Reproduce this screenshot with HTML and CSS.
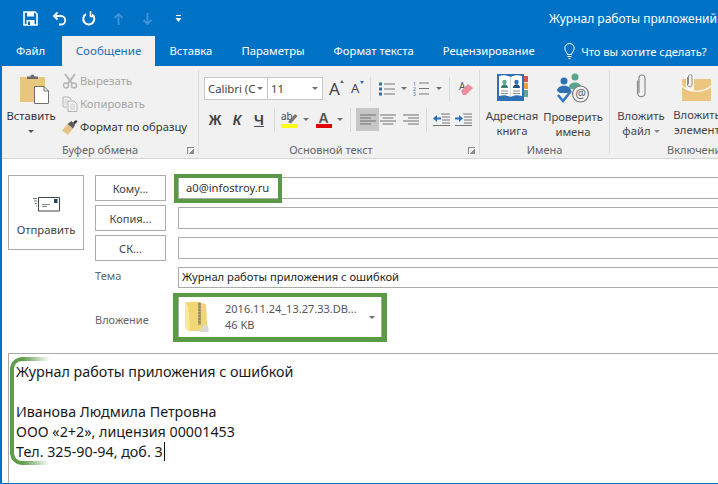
FILE: index.html
```html
<!DOCTYPE html>
<html lang="ru">
<head>
<meta charset="utf-8">
<title>Журнал работы приложения с ошибкой</title>
<link rel="stylesheet" href="styles.css">
</head>
<body>
<div class="window">
  <header class="titlebar">
    <div class="qat">
      <svg class="qi qi-save" width="15" height="15" viewBox="0 0 15 15"><path d="M1 1h11l2 2v11H1z" fill="none" stroke="#fff" stroke-width="1.6"/><rect x="4" y="1" width="7" height="4.5" fill="#fff"/><rect x="3.5" y="9" width="8" height="5" fill="#fff"/><rect x="5" y="10.5" width="2" height="3.5" fill="#0072c6"/></svg>
      <svg class="qi qi-undo" width="15" height="15" viewBox="0 0 15 15"><path d="M5.5 1.5 2 5l3.500 3.500" fill="none" stroke="#fff" stroke-width="1.800"/><path d="M2.500 5H9a4 4 0 0 1 0 8.500H7" fill="none" stroke="#fff" stroke-width="1.800"/></svg>
      <svg class="qi qi-redo" width="15" height="15" viewBox="0 0 15 15"><path d="M5 3.200a5.500 5.500 0 1 0 6 .3" fill="none" stroke="#fff" stroke-width="2"/><path d="M9.500 0v5.500H14" fill="none" stroke="#fff" stroke-width="1.600"/></svg>
      <svg class="qi qi-up" width="11" height="14" viewBox="0 0 11 14"><path d="M5.500 13V2M1.500 6l4-4 4 4" fill="none" stroke="#3f93d6" stroke-width="1.800"/></svg>
      <svg class="qi qi-down" width="11" height="14" viewBox="0 0 11 14"><path d="M5.500 1v11M1.500 8l4 4 4-4" fill="none" stroke="#3f93d6" stroke-width="1.800"/></svg>
      <svg class="qi qi-more" width="7" height="8" viewBox="0 0 7 8"><path d="M1 .5h5" stroke="#fff"/><path d="M.5 3h6L3.500 7z" fill="#fff"/></svg>
    </div>
    <div class="doc-title">Журнал работы приложений с ошибкой</div>
  </header>

  <nav class="tabs">
    <span class="tab tab-file">Файл</span>
    <span class="tab tab-active">Сообщение</span>
    <span class="tab">Вставка</span>
    <span class="tab">Параметры</span>
    <span class="tab">Формат текста</span>
    <span class="tab">Рецензирование</span>
    <span class="tell">
      <svg width="11" height="17" viewBox="0 0 11 17"><path d="M3.500 11.500C3 9 .8 8 .8 5.200a4.700 4.700 0 0 1 9.400 0C10.200 8 8 9 7.500 11.500z" fill="none" stroke="#fff"/><path d="M3.500 13.500h4M4.500 15.500h2" stroke="#fff"/></svg>
      Что вы хотите сделать?
    </span>
  </nav>

  <section class="ribbon">
    <div class="group g-clip">
      <div class="group-body clip-body">
        <div class="paste">
          <svg width="29" height="30" viewBox="0 0 29 30"><rect x="0" y="3" width="25" height="25" fill="#e8c67d"/><path d="M7 5V2.500h3.500a2 2 0 0 1 4 0H18V5z" fill="#6a6a6a"/><path d="M14.500 12.500H24l4.500 4.500v12.500h-14z" fill="#fff" stroke="#6f6f6f"/><path d="M24 12.500V17h4.500" fill="none" stroke="#6f6f6f"/></svg>
          <span class="paste-label">Вставить</span>
          <span class="caret caret-dark"></span>
        </div>
        <div class="clip-list">
          <div class="clip-row off">
            <svg width="16" height="16" viewBox="0 0 16 16"><path d="M3 1l7.500 10M13 1 5.500 11" stroke="#b5b5b5" stroke-width="2" fill="none"/><circle cx="4" cy="12.500" r="2.500" fill="none" stroke="#b5b5b5" stroke-width="1.400"/><circle cx="12" cy="12.500" r="2.500" fill="none" stroke="#b5b5b5" stroke-width="1.400"/></svg>
            <span>Вырезать</span>
          </div>
          <div class="clip-row off">
            <svg width="16" height="16" viewBox="0 0 16 16"><path d="M1 1h6l2 2v1M1 1v10h4" fill="none" stroke="#b5b5b5"/><path d="M6 5h6l3 3v7.500H6z" fill="none" stroke="#b5b5b5"/><path d="M8 9h5M8 11h5M8 13h5M2.500 4h3M2.500 6h2.500M2.500 8h2.500" stroke="#cfcfcf"/></svg>
            <span>Копировать</span>
          </div>
          <div class="clip-row">
            <svg width="16" height="16" viewBox="0 0 16 16"><path d="M0 11.500 5.500 5l5.500 4.500L6 16z" fill="#e3c486"/><path d="M5.500 5 9.500 2 13 6l-2 3.500z" fill="#5b5b5b"/><path d="M11 3.500 14 1l1.500 1.500-3 3z" fill="#333"/></svg>
            <span>Формат по образцу</span>
          </div>
        </div>
      </div>
      <div class="group-label">Буфер обмена<i class="launcher"></i></div>
    </div>

    <div class="group g-font">
      <div class="group-body font-body">
        <div class="font-row row-one">
          <div class="combo combo-font"><span class="combo-text">Calibri (С</span><span class="caret"></span></div>
          <div class="combo combo-size"><span>11</span><span class="caret"></span></div>
          <span class="grow">A<i class="tri tri-up"></i></span>
          <span class="shrink">A<i class="tri tri-down"></i></span>
          <i class="vsep sep-a"></i>
          <svg class="ico-bullets" width="16" height="14" viewBox="0 0 16 14"><path d="M5 2h11M5 7h11M5 12h11" stroke="#777"/><rect y="0.500" width="3" height="3" fill="#2a6fb5"/><rect y="5.500" width="3" height="3" fill="#2a6fb5"/><rect y="10.500" width="3" height="3" fill="#2a6fb5"/></svg>
          <span class="caret caret-bullets"></span>
          <svg class="ico-numbers" width="16" height="15" viewBox="0 0 16 15"><path d="M6 2h10M6 7.500h10M6 13h10" stroke="#777"/><text x="0" y="5" class="tiny">1</text><text x="0" y="10" class="tiny">2</text><text x="0" y="15" class="tiny">3</text></svg>
          <span class="caret caret-numbers"></span>
          <i class="vsep sep-b"></i>
          <svg class="ico-clear" width="15" height="17" viewBox="0 0 15 17"><text x="1" y="10" class="clear-a">A</text><path d="M3 11 10 4l5 4-7 7H5z" fill="#ed8c9a"/></svg>
        </div>
        <div class="font-row row-two">
          <b class="fmt fmt-b">Ж</b>
          <b class="fmt fmt-i">К</b>
          <b class="fmt fmt-u">Ч</b>
          <i class="vsep sep-c"></i>
          <svg class="ico-hl" width="17" height="18" viewBox="0 0 17 18"><text x="0" y="9" class="ab">ab</text><path d="M7 11 14 3l2.500 2-6.500 7.500z" fill="#777"/><rect y="13" width="17" height="4" fill="#ffff1e"/></svg>
          <span class="caret caret-hl"></span>
          <svg class="ico-color" width="16" height="17" viewBox="0 0 16 17"><text x="2.500" y="12" class="fa">A</text><rect y="13" width="16" height="4" fill="#e00000"/></svg>
          <span class="caret caret-color"></span>
          <i class="vsep sep-d"></i>
          <span class="align align-on"><svg width="16" height="12" viewBox="0 0 16 12"><path d="M0 1h16M0 4h11M0 7h16M0 10h11" stroke="#707070"/></svg></span>
          <span class="align align-center"><svg width="16" height="12" viewBox="0 0 16 12"><path d="M0 1h16M2.500 4h11M0 7h16M2.500 10h11" stroke="#707070"/></svg></span>
          <span class="align align-last"><svg width="16" height="12" viewBox="0 0 16 12"><path d="M0 1h16M5 4h11M0 7h16M5 10h11" stroke="#707070"/></svg></span>
          <i class="vsep sep-e"></i>
          <svg class="ico-ind" width="17" height="13" viewBox="0 0 17 13"><path d="M8 1h9M9 4h8M9 7h8M9 10h8M0 12.500h17" stroke="#777"/><path d="M0 5.500 4 2v2.500h4v2H4V9z" fill="#2a6fb5"/></svg>
          <svg class="ico-outd" width="17" height="13" viewBox="0 0 17 13"><path d="M8 1h9M9 4h8M9 7h8M9 10h8M0 12.500h17" stroke="#777"/><path d="M8 5.500 4 2v2.500H0v2h4V9z" fill="#2a6fb5"/></svg>
        </div>
      </div>
      <div class="group-label label-font">Основной текст<i class="launcher"></i></div>
    </div>

    <div class="group g-names">
      <div class="group-body big-body">
        <div class="big big-book">
          <svg width="31" height="29" viewBox="0 0 31 29"><rect x="0" y="1" width="27" height="27" fill="#2f6fb3"/><path d="M2 3c4-1.500 8-1 11.500 1v20C10 22 6 21.500 2 23z" fill="#fff"/><path d="M25 3c-4-1.500-8-1-11.500 1v20c3.500-2 7.500-2.500 11.500-1z" fill="#fff"/><circle cx="7.500" cy="9" r="2.200" fill="#5da88e"/><path d="M4 15c0-5 7-5 7 0z" fill="#3a7f70"/><circle cx="19.500" cy="9" r="2.200" fill="#2f6fb3"/><path d="M16 15c0-5 7-5 7 0z" fill="#204f86"/><path d="M4 18h7M4 20.500h7M16 18h7M16 20.500h7" stroke="#8a8a8a"/><rect x="27" y="3" width="4" height="6" fill="#d9534f"/><rect x="27" y="10" width="4" height="6" fill="#e8a23c"/><rect x="27" y="17" width="4" height="7" fill="#5da88e"/></svg>
          <span>Адресная<br>книга</span>
        </div>
        <div class="big big-check">
          <svg width="33" height="30" viewBox="0 0 33 30"><circle cx="18" cy="4" r="3.500" fill="#59a48c"/><path d="M12 14c0-6 12-6 12 0l-3 2h-7z" fill="#59a48c"/><circle cx="7" cy="8" r="3.500" fill="#2f6fb3"/><path d="M0 18c0-7 14-7 14 0l-3 2H3z" fill="#2f6fb3"/><path d="M1 22l5 6 8-10" fill="none" stroke="#2f77c2" stroke-width="2.500"/><circle cx="23.500" cy="21" r="8" fill="#f1f1f1" stroke="#777" stroke-width="1.200"/><text x="18.300" y="25" class="at">@</text></svg>
          <span>Проверить<br>имена</span>
        </div>
      </div>
      <div class="group-label">Имена</div>
    </div>

    <div class="group g-incl">
      <div class="group-body big-body incl-body">
        <div class="big big-file">
          <svg width="13" height="27" viewBox="0 0 13 27"><path d="M3 7v13a3.800 3.800 0 0 0 7.500 0V4.500a3 3 0 0 0-6 0v15" fill="none" stroke="#8a8a8a" stroke-width="1.200" transform="translate(-.5 .5)"/></svg>
          <span>Вложить<br>файл<i class="caret caret-inline"></i></span>
        </div>
        <div class="big big-item">
          <svg width="30" height="28" viewBox="0 0 30 28"><rect x="0" y="6" width="29" height="22" fill="#ecc67f"/><path d="M0 13c7 7 22 7 29 0" fill="none" stroke="#fff" stroke-width="1.200"/><rect x="4" y="0" width="8" height="17" fill="#fff" opacity=".8"/><path d="M5.500 4v8a2.300 2.300 0 0 0 4.500 0V3a1.800 1.800 0 0 0-3.500 0v8" fill="none" stroke="#8a8a8a"/></svg>
          <span>Вложить<br>элемент</span>
        </div>
      </div>
      <div class="group-label label-left">Включение</div>
    </div>
  </section>

  <main class="compose">
    <div class="headers">
      <button class="send" type="button">
        <svg width="27" height="15" viewBox="0 0 27 15"><path d="M5.500.500h21v13.500h-21z" fill="#fff" stroke="#3f4650"/><rect x="21" y="2" width="3.500" height="4" fill="#2b3f66"/><path d="M9 7.500h8M9 9.500h5" stroke="#888"/><path d="M0 1.500h4M1 4h3M2 6.500h2M3 9h1" stroke="#6b7f8a"/></svg>
        <span>Отправить</span>
      </button>
      <div class="fields">
        <div class="field-row">
          <button class="addr" type="button">Кому...</button>
          <div class="input input-to"><span class="chip">a0@infostroy.ru</span></div>
        </div>
        <div class="field-row">
          <button class="addr" type="button">Копия...</button>
          <div class="input"></div>
        </div>
        <div class="field-row">
          <button class="addr" type="button">СК...</button>
          <div class="input"></div>
        </div>
        <div class="field-row row-subject">
          <label class="field-label label-subject">Тема</label>
          <div class="input input-subject">Журнал работы приложения с ошибкой</div>
        </div>
        <div class="field-row row-attach">
          <label class="field-label label-attach">Вложение</label>
          <div class="attach">
            <svg width="26" height="32" viewBox="0 0 26 32"><path d="M1 1.500 12 .5l10 2.500 1.500 27H6C3 30 1 27 1 24z" fill="#f0d676"/><path d="M1 2c4 3 4 6 4.500 22 0 3 1 6 .5 6-3 0-5-3-5-6z" fill="#fbe99a"/><path d="M14 1.500h3V24h-3z" fill="#b4a568"/><path d="M14.500 3h2M14.500 6h2M14.500 9h2M14.500 12h2M14.500 15h2M14.500 18h2M14.500 21h2" stroke="#6e6e6e"/><path d="M20 24c4-1 5 3 4.500 7H15z" fill="#d8d8d8"/></svg>
            <div class="attach-text">
              <span class="attach-name">2016.11.24_13.27.33.DB...</span>
              <span class="attach-size">46 KB</span>
            </div>
            <span class="caret caret-attach"></span>
          </div>
        </div>
      </div>
    </div>
    <div class="body-wrap">
      <div class="editor">
        <i class="bracket"></i>
        <p>Журнал работы приложения с ошибкой</p>
        <p>&nbsp;</p>
        <p>Иванова Людмила Петровна</p>
        <p>ООО «2+2», лицензия 00001453</p>
        <p>Тел. 325-90-94, доб. 3<i class="cursor"></i></p>
      </div>
    </div>
  </main>
</div>
</body>
</html>
```

FILE: styles.css
```css
* { box-sizing: border-box; }
html, body { margin: 0; padding: 0; }
body {
  width: 718px;
  height: 484px;
  overflow: hidden;
  background: #fff;
  font-family: "Noto Sans", "Open Sans", sans-serif;
  font-size: 11.3px;
  color: #444;
}
.window {
  width: 718px;
  height: 484px;
  display: flex;
  flex-direction: column;
  border-left: 2px solid #0072c6;
  border-bottom: 1px solid #0072c6;
  overflow: hidden;
}
svg { display: block; flex: none; }

/* title bar */
.titlebar {
  height: 36px;
  margin-left: -2px;
  background: #0072c6;
  display: flex;
  align-items: center;
  flex: none;
  color: #fff;
}
.qat { display: flex; align-items: center; width: 549px; padding-left: 23px; padding-top: 1px; }
.qi-undo { margin-left: 14px; }
.qi-redo { margin-left: 14px; }
.qi-up { margin-left: 17px; }
.qi-down { margin-left: 18px; }
.qi-more { margin-left: 22px; }
.doc-title { white-space: nowrap; font-size: 12px; overflow: hidden; flex: 1; }

/* tabs */
.tabs {
  height: 30px;
  margin-left: -2px;
  flex: none;
  background: #0072c6;
  display: flex;
  color: #fff;
  font-size: 11.3px;
  white-space: nowrap;
  overflow: hidden;
}
.tab { padding: 0 14.5px; line-height: 30px; flex: none; }
.tab-file { width: 62px; padding: 0 0 0 16px; }
.tab-active {
  width: 93px;
  padding: 0;
  text-align: center;
  background: #f1f1f1;
  color: #1a6fb5;
  font-size: 11.6px;
}
.tell { display: flex; align-items: center; gap: 6px; margin-left: 15px; font-size: 11.2px; }

/* ribbon */
.ribbon {
  height: 93px;
  flex: none;
  display: flex;
  background: #f1f1f1;
  border-bottom: 1px solid #d6d6d6;
  overflow: hidden;
}
.group {
  display: flex;
  flex-direction: column;
  flex: none;
  margin-top: 4px;
  border-right: 1px solid #dcdcdc;
  height: 84px;
}
.group-body { height: 71px; flex: none; display: flex; }
.group-label {
  position: relative;
  height: 17px;
  flex: none;
  text-align: center;
  color: #666;
  font-size: 11px;
  line-height: 17px;
  white-space: nowrap;
}
.launcher {
  position: absolute;
  right: 4px;
  top: 6px;
  width: 7px;
  height: 7px;
  border-left: 1px solid #8a8a8a;
  border-top: 1px solid #8a8a8a;
  background: linear-gradient(135deg, transparent 55%, #8a8a8a 55%);
}
.g-clip { width: 197px; }
.g-font { width: 281px; }
.g-names { width: 130px; }
.g-incl { flex: 1; border-right: 0; }
.label-font { padding-right: 16px; }
.label-left { text-align: left; padding-left: 57px; }

.caret {
  display: inline-block;
  width: 0;
  height: 0;
  border-left: 3px solid transparent;
  border-right: 3px solid transparent;
  border-top: 3px solid #707070;
  flex: none;
}
.caret-dark { border-top-color: #555; margin-top: 6px; }

/* clipboard */
.clip-body { padding-left: 4px; }
.paste {
  width: 50px;
  display: flex;
  flex-direction: column;
  align-items: center;
  padding-top: 4px;
  flex: none;
  color: #333;
  font-size: 11.3px;
}
.paste svg { margin-left: 7px; }
.paste-label { margin-top: 4px; line-height: 16px; white-space: nowrap; }
.clip-list { margin-left: 6px; margin-top: -1px; display: flex; flex-direction: column; }
.clip-row {
  height: 23px;
  display: flex;
  align-items: center;
  gap: 2px;
  white-space: nowrap;
  color: #333;
  font-size: 11.3px;
}
.clip-row.off { color: #a6a6a6; }

/* font group */
.font-body { flex-direction: column; padding-left: 5px; }
.font-row { display: flex; align-items: center; }
.row-one { height: 23px; margin-top: 7px; }
.row-two { height: 23px; margin-top: 8px; }
.combo {
  height: 23px;
  background: #fff;
  border: 1px solid #c8c8c8;
  display: flex;
  align-items: center;
  justify-content: space-between;
  padding: 0 4px 0 3px;
  color: #444;
  font-size: 11.3px;
  white-space: nowrap;
  overflow: hidden;
}
.combo-font { width: 64px; }
.combo-size { width: 56px; margin-left: -1px; }
.combo-text { width: 48px; overflow: hidden; }
.grow { position: relative; margin-left: 6px; font-size: 17px; line-height: 23px; color: #444; width: 22px; }
.shrink { position: relative; font-size: 13px; line-height: 23px; color: #444; width: 19px; }
.tri {
  position: absolute;
  top: 3px;
  width: 0;
  height: 0;
  border-left: 2.5px solid transparent;
  border-right: 2.5px solid transparent;
}
.grow .tri { left: 11px; }
.shrink .tri { left: 9px; top: 4px; }
.tri-up { border-bottom: 3px solid #666; }
.tri-down { border-top: 3px solid #2a6fb5; }
.vsep { display: block; width: 1px; height: 24px; background: #dadada; flex: none; }
.ico-bullets { margin-left: 8px; }
.caret-bullets { margin-left: 6px; }
.ico-numbers { margin-left: 6px; }
.caret-numbers { margin-left: 7px; }
.sep-b { margin-left: 7px; }
.ico-clear { margin-left: 8px; }
.tiny { font-size: 5px; fill: #2a6fb5; }
.clear-a { font-size: 10px; fill: #555; }
.fmt { font-family: "Liberation Sans", sans-serif; color: #444; font-size: 14px; width: 22px; text-align: center; }
.fmt-i { font-style: italic; }
.fmt-u { text-decoration: underline; }
.sep-c { margin-left: 4px; }
.ico-hl { margin-left: 6px; }
.ab { font-size: 10px; fill: #444; font-family: "Noto Sans", sans-serif; }
.caret-hl { margin-left: 5px; }
.ico-color { margin-left: 7px; }
.fa { font-size: 14px; font-weight: 700; fill: #555; font-family: "Liberation Sans", sans-serif; }
.caret-color { margin-left: 5px; }
.sep-d { margin-left: 7px; }
.align {
  width: 23px;
  height: 23px;
  display: flex;
  align-items: center;
  justify-content: center;
  flex: none;
}
.align-on { background: #c6c6c6; margin-left: 5px; }
.align-center { margin-left: -2.5px; }
.sep-e { margin-left: 3.5px; }
.ico-ind { margin-left: 6px; }
.ico-outd { margin-left: 5px; }

/* big buttons */
.big-body { padding-left: 6px; }
.big {
  display: flex;
  flex-direction: column;
  align-items: center;
  padding-top: 3px;
  color: #444;
  font-size: 11.3px;
  line-height: 15px;
  text-align: center;
  white-space: nowrap;
}
.big span { margin-top: 6px; }
.big-book { width: 52px; }
.big-check { width: 60px; margin-left: 5px; }
.incl-body { padding-left: 7px; }
.big-file { width: 48px; }
.big-item { width: 50px; margin-left: 7px; }
.big-file span { margin-top: 8px; }
.caret-inline { margin: 0 0 2px 3px; border-top-color: #888; }
.at { font-size: 12px; fill: #666; font-family: "Noto Sans", sans-serif; }

/* compose */
.compose { flex: 1; display: flex; flex-direction: column; min-height: 0; }
.headers { display: flex; padding: 16px 0 0 6px; height: 194px; flex: none; }
.send {
  width: 76px;
  height: 75px;
  flex: none;
  background: #fff;
  border: 1px solid #ababab;
  font: inherit;
  color: #444;
  font-size: 11.3px;
  display: flex;
  flex-direction: column;
  align-items: center;
  padding: 21px 0 0;
}
.send span { margin-top: 10px; }
.fields { margin-left: 11px; flex: 1; display: flex; flex-direction: column; }
.field-row { display: flex; align-items: center; margin-bottom: 4px; height: 26px; flex: none; }
.addr {
  width: 71px;
  height: 26px;
  flex: none;
  background: #fff;
  border: 1px solid #ababab;
  font: inherit;
  font-size: 11px;
  color: #444;
  padding: 0;
}
.input {
  height: 22px;
  margin-left: 12px;
  flex: 1;
  margin-right: -2px;
  border: 1px solid #ababab;
  background: #fff;
  color: #222;
  font-size: 11.2px;
  line-height: 18px;
  white-space: nowrap;
}
.chip {
  display: inline-block;
  height: 21px;
  width: 100px;
  margin-left: -1px;
  padding-left: 8px;
  line-height: 20px;
  outline: 4px solid #5a9a44;
  color: #333;
  vertical-align: top;
}
.input-to { margin-top: -1px; }
.field-label { width: 83px; flex: none; color: #666; font-size: 11px; }
.label-subject { margin-top: -4px; }
.row-subject { height: 21px; margin-top: 2px; margin-bottom: 0; }
.field-label + .input { margin-left: 0; height: 21px; padding-left: 3px; }
.row-attach { height: 43px; margin-top: 9px; margin-bottom: 0; align-items: flex-start; }
.label-attach { margin-top: 15px; }
.attach {
  position: relative;
  width: 204px;
  height: 40px;
  border-left: 1px solid #ababab;
  border-right: 1px solid #ababab;
  display: flex;
  align-items: center;
  padding-left: 5px;
  background: #fff;
}
.attach::after {
  content: "";
  position: absolute;
  left: -6px;
  right: -6px;
  top: -4px;
  bottom: -5px;
  border: solid #5a9a44;
  border-width: 4px 5px 5px;
}
.attach-text { display: flex; flex-direction: column; margin-left: 15px; font-size: 11px; color: #555; line-height: 16px; white-space: nowrap; }
.caret-attach { margin-left: 12px; }

.body-wrap { flex: 1; padding: 0 0 0 6px; min-height: 0; }
.editor {
  position: relative;
  height: 100%;
  margin-right: -2px;
  border-top: 1px solid #ababab;
  border-left: 1px solid #ababab;
  padding: 7.5px 0 0 7px;
  color: #1a1a1a;
  font-size: 14.3px;
  line-height: 20px;
}
.editor p { margin: 0; height: 20px; white-space: nowrap; }
.bracket {
  position: absolute;
  left: 1px;
  top: 3px;
  width: 40px;
  height: 108px;
  border-radius: 12px 0 0 12px;
  border: 4px solid transparent;
  border-right: 0;
  background: linear-gradient(90deg, #5f9c4b 0, #5f9c4b 30%, rgba(95,156,75,0) 100%) border-box;
  -webkit-mask: linear-gradient(#000 0 0) padding-box exclude, linear-gradient(#000 0 0) border-box;
  mask: linear-gradient(#000 0 0) padding-box exclude, linear-gradient(#000 0 0) border-box;
}
.cursor { display: inline-block; width: 1px; height: 19px; background: #000; vertical-align: -4px; margin-left: 1px; }
```
